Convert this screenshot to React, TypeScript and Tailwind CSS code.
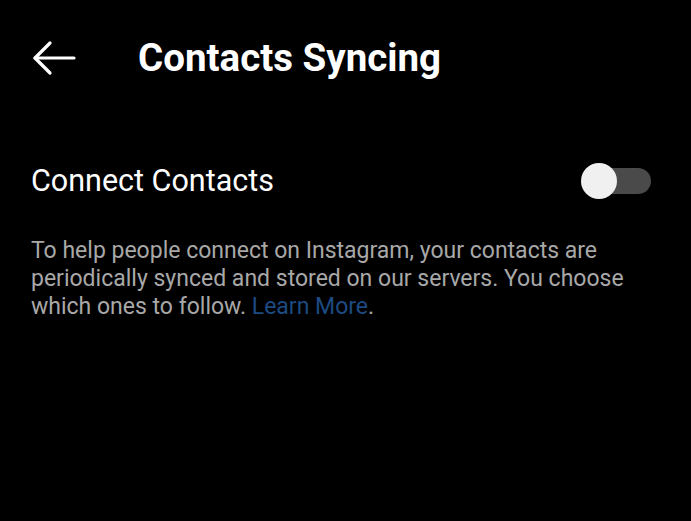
import React from "react";

export default function App() {
  return (
    <div className="w-[691px] h-[521px] bg-black overflow-hidden" style={{ fontFamily: "Roboto, 'Liberation Sans', sans-serif" }}>
      <div className="flex items-center h-[116px]">
        <div className="w-[138px] pl-[32px] flex items-center">
          <svg width="44" height="36" viewBox="0 0 44 36" fill="none" stroke="#ffffff" strokeWidth="3.2" strokeLinecap="round" strokeLinejoin="round">
            <path d="M42 18H3" />
            <path d="M18 3L3 18L18 33" />
          </svg>
        </div>
        <div className="text-white text-[38.5px] font-bold leading-none">Contacts Syncing</div>
      </div>
      <div className="flex items-center justify-between pl-[31px] pr-[40px] mt-[36px] h-[58px]">
        <div className="text-white text-[30.5px] leading-none">Connect Contacts</div>
        <div className="relative w-[70px] h-[36px] flex items-center">
          <div className="absolute left-[12px] right-0 h-[26px] rounded-full bg-[#4a4a4a]" />
          <div className="absolute left-0 w-[36px] h-[36px] rounded-full bg-[#f0f0f0]" />
        </div>
      </div>
      <p className="mt-[27px] pl-[31px] w-[660px] text-[23px] leading-[28px] text-[#a8a8a8]">
        To help people connect on Instagram, your contacts are periodically synced and stored on our servers. You choose which ones to follow. <span className="text-[#1d4a82]">Learn More</span>.
      </p>
    </div>
  );
}
